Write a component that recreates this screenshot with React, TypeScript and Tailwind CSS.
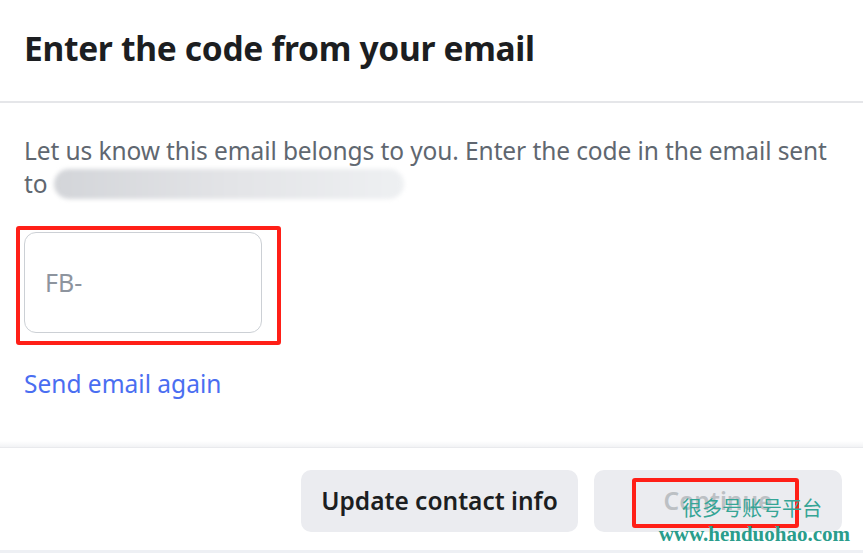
const EmailCodeDialog = () => {
  return (
    <div className="relative w-[863px] h-[553px] bg-white overflow-hidden flex flex-col font-['Noto_Sans',sans-serif]">
      {/* Header */}
      <div className="h-[103px] shrink-0 flex items-center px-6 border-b-2 border-[#e5e6e9]">
        <h2 className="text-[33.5px] font-bold text-[#1c1e21] leading-none -mt-1 tracking-[-0.3px]">
          Enter the code from your email
        </h2>
      </div>

      {/* Body */}
      <div className="h-[338px] shrink-0 px-6 pt-[31px]">
        <p className="text-[24.5px] leading-[33px] text-[#606770] tracking-[-0.1px]">
          Let us know this email belongs to you. Enter the code in the email sent
          <br />
          to{" "}
          <span className="inline-block align-middle w-[350px] h-[30px] -mt-1 rounded-full bg-gradient-to-r from-[#d3d5d9] via-[#e3e4e7] to-[#eef0f2] blur-[2px]" />
        </p>

        <div className="relative mt-[32px] w-[238px]">
          <div className="h-[101px] w-[238px] rounded-xl border border-[#ccd0d5] flex items-center px-5">
            <span className="text-[25px] text-[#8d949e]">FB-</span>
          </div>
          {/* red marker frame */}
          <div className="absolute -left-2 -top-[6px] w-[265px] h-[119px] border-[4px] border-[#ff1f17] rounded-[3px]" />
        </div>

        <div className="mt-[34px] text-[24.5px] text-[#4a6ef1] leading-[33px]">Send email again</div>
      </div>

      {/* Footer */}
      <div className="h-[6px] shrink-0 bg-gradient-to-b from-white to-[#f2f3f5]" />
      <div className="flex-1 border-t border-[#e9eaed] flex flex-col">
        <div className="flex-1 flex justify-end items-start pt-[22px] pr-[21px] gap-4">
          <button className="h-[62px] w-[277px] rounded-[10px] bg-[#ebecf0] text-[24.5px] font-semibold text-[#1c1e21]">
            Update contact info
          </button>
          <button className="relative h-[62px] w-[248px] rounded-[10px] bg-[#ebecf0] text-[24.5px] font-semibold text-[#bcc0c4]">
            Continue
            {/* red marker on continue */}
            <span className="absolute left-[38px] top-[8px] w-[167px] h-[50px] border-[4px] border-[#ff1f17] rounded-[3px]" />
          </button>
        </div>
        <div className="h-[3px] bg-[#eef0f4]" />
      </div>

      {/* watermark */}
      <div className="absolute right-[13px] top-[498px] flex flex-col items-end leading-none">
        <span className="text-[20px] text-[#35a596] font-['Noto_Sans_CJK_SC',sans-serif] mr-[28px]">很多号账号平台</span>
        <span className="mt-[6px] text-[21px] font-bold text-[#2a9d8c] font-['Liberation_Serif',serif]">
          www.henduohao.com
        </span>
      </div>
    </div>
  );
};

export default function App() {
  return <EmailCodeDialog />;
}
